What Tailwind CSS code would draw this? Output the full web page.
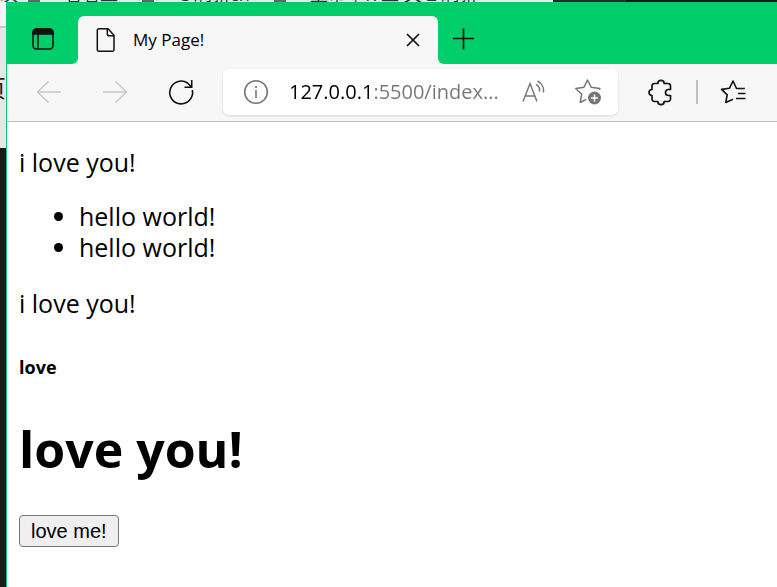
<!DOCTYPE html>
<html lang="en">
  <head>
    <meta charset="UTF-8" />
    <meta name="viewport" content="width=device-width, initial-scale=1.0" />
    <title>My Page!</title>
    <script src="https://cdn.jsdelivr.net/npm/@tailwindcss/browser@4"></script>
  </head>
  <body class="min-h-screen flex flex-col bg-[#1a1a1a] text-black font-['Open_Sans','Noto_Sans_CJK_SC',sans-serif]">
    <!-- window behind, top edge -->
    <div class="flex h-[2px] overflow-hidden bg-[#1a1a1a]" aria-hidden="true">
      <div class="flex items-end w-[553px] h-full bg-[#e6e6e6] text-[#333] text-lg leading-4 whitespace-nowrap">
        <span class="w-7 shrink-0 text-[#235]">次</span>
        <span class="w-3 h-full shrink-0 mr-6 bg-[#666]"></span>
        <span class="w-[78px] shrink-0">看看工</span>
        <span class="w-3 h-full shrink-0 mr-6 bg-[#666]"></span>
        <span class="w-24 shrink-0">C 刷新cn</span>
        <span class="w-3 h-full shrink-0 mr-6 bg-[#666]"></span>
        <span>上市 | R 工 关 Z 刷新</span>
      </div>
      <div class="w-[73px] bg-[#2b2b2b]"></div>
    </div>

    <div class="flex flex-1">
      <!-- window behind, left edge -->
      <div class="w-[6px] shrink-0 overflow-hidden" aria-hidden="true">
        <div class="flex flex-col items-end h-[146px] bg-[#e6e6e6] text-[#222] text-2xl">
          <div class="w-full h-[26px] border-b-2 border-[#c8c8c8] bg-[#f3f3f3]"></div>
          <span class="mt-11">页</span>
        </div>
      </div>

      <div class="flex flex-col flex-1 min-w-0 border-l border-[#00ce6a] bg-white">
        <!-- tabs -->
        <div class="flex h-[62px] bg-[#f7f7f7]">
          <button class="flex items-center justify-center w-[71px] shrink-0 rounded-br-md pt-3 bg-[#00ce6a]" aria-label="Tab actions">
            <svg class="w-6 h-6" viewBox="0 0 24 24" fill="none" stroke="#111" stroke-width="1.5">
              <rect x="2" y="2" width="20" height="20" rx="3.5" />
              <path d="M2 7V5.5A3.5 3.5 0 0 1 5.500 2h13A3.5 3.5 0 0 1 22 5.500V7z" fill="#111" />
              <path d="M7 7v15" />
            </svg>
          </button>
          <div class="flex w-[360px] shrink-0 bg-[#00ce6a]">
            <div class="flex items-center w-full mt-[14px] px-4 rounded-t-md bg-[#f7f7f7]">
              <svg class="w-6 h-6 shrink-0" viewBox="0 0 24 24" fill="none" stroke="#111" stroke-width="1.5" stroke-linejoin="round">
                <path d="M5 .8h9l6 6.500v14.200a1.700 1.700 0 0 1-1.700 1.700H5a1.700 1.700 0 0 1-1.700-1.700v-19A1.700 1.700 0 0 1 5 .8z" />
                <path d="M13.300 1v5a1.800 1.800 0 0 0 1.800 1.800H20" />
              </svg>
              <span class="flex-1 ml-[15px] text-[17px]">My Page!</span>
              <button aria-label="Close tab">
                <svg class="w-[18px] h-[18px]" viewBox="0 0 18 18" stroke="#111" stroke-width="1.7">
                  <path d="M3 3l12 12M15 3L3 15" />
                </svg>
              </button>
            </div>
          </div>
          <div class="flex flex-1 items-center rounded-bl-md pl-3 pt-3 bg-[#00ce6a]">
            <button aria-label="New tab">
              <svg class="w-[26px] h-[26px]" viewBox="0 0 26 26" stroke="#111" stroke-width="1.7">
                <path d="M13.500 2.500v21M3 12.500h21" />
              </svg>
            </button>
          </div>
        </div>

        <!-- toolbar -->
        <div class="flex items-center h-[58px] pl-7 pb-[2px] border-b border-[#bbb] bg-[#f7f7f7]">
          <button aria-label="Back">
            <svg class="w-7 h-7" viewBox="0 0 28 28" fill="none" stroke="#c8c8c8" stroke-width="1.5">
              <path d="M26 14H2.500M13.500 3.500L2.500 14l11 10.500" />
            </svg>
          </button>
          <button class="ml-[38px]" aria-label="Forward">
            <svg class="w-7 h-7" viewBox="0 0 28 28" fill="none" stroke="#c8c8c8" stroke-width="1.5">
              <path d="M2 14h23.500M14.500 3.500l11 10.500-11 10.500" />
            </svg>
          </button>
          <button class="ml-[38px]" aria-label="Refresh">
            <svg class="w-7 h-7" viewBox="0 0 28 28" fill="none" stroke="#111" stroke-width="1.6">
              <path d="M25.300 12A11.400 11.400 0 1 1 20.500 5L24.500 9M24.700 2v7.200h-7.200" />
            </svg>
          </button>
          <div class="flex items-center w-[395px] h-[46px] ml-7 px-5 rounded-md bg-white shadow-sm">
            <svg class="w-[26px] h-[26px] shrink-0" viewBox="0 0 26 26" fill="none" stroke="#767676" stroke-width="1.6">
              <circle cx="13" cy="13" r="11.3" />
              <path d="M13 11v8" />
              <circle cx="13" cy="8" r="1.1" fill="#767676" stroke="none" />
            </svg>
            <input
              type="text"
              aria-label="Address"
              value="127.0.0.1:5500/index..."
              class="flex-1 min-w-0 ml-5 text-xl text-transparent bg-clip-text bg-[linear-gradient(to_right,#000_82px,#767676_82px)]"
            />
            <button class="ml-4" aria-label="Read aloud">
              <svg class="w-[26px] h-[26px]" viewBox="0 0 26 26" fill="none" stroke="#767676" stroke-width="1.5">
                <path d="M3 22.500L10 4.500l7 18M5.500 17h9M16 5.500a6.500 6.500 0 0 1 3.500 7M17.500 2a11 11 0 0 1 6 11.500" />
              </svg>
            </button>
            <button class="ml-7 -mr-1" aria-label="Add to favorites">
              <svg class="w-7 h-7" viewBox="0 0 28 28" fill="none" stroke="#767676" stroke-width="1.5" stroke-linejoin="round">
                <path d="M25.500 12l.3-1.500-8.600-1.300L13.500 2 10 9.200l-8.300 1.300 6 5.700-1.500 8.300 6-3.200" />
                <circle cx="20.500" cy="20" r="6.5" fill="#767676" stroke="none" />
                <path d="M20.500 16.500v7M17 20h7" stroke="#fff" />
              </svg>
            </button>
          </div>
          <button class="ml-7" aria-label="Extensions">
            <svg class="w-7 h-7" viewBox="0 0 28 28" fill="none" stroke="#111" stroke-width="1.7" stroke-linejoin="round">
              <path d="M8.500 5.500h3.300a3.200 3.200 0 0 1 6.400 0H22A2.500 2.500 0 0 1 24.500 8v3.500H22.500a3 3 0 0 0 0 6h2V21a2.500 2.500 0 0 1-2.500 2.500h-3.800a3.200 3.200 0 0 1-6.400 0H8.500A2.500 2.500 0 0 1 6 21v-3.500a3 3 0 0 1 0-6V8a2.500 2.500 0 0 1 2.500-2.500z" />
            </svg>
          </button>
          <div class="w-[2px] h-6 ml-[22px] bg-[#c0c0c0]"></div>
          <button class="ml-[21px]" aria-label="Favorites">
            <svg class="w-7 h-7" viewBox="0 0 28 28" fill="none" stroke="#111" stroke-width="1.6" stroke-linejoin="round">
              <path d="M25.800 10.500h-8.300L14 3l-3.500 7.200-8 1.200 5.700 5.500-1.400 7.600 7.200-3.300M19 15.500h7.500M17 20.500h9.500" />
            </svg>
          </button>
        </div>

        <!-- page -->
        <main class="px-3 pt-6 text-[25px] leading-8">
          <p>i love you!</p>
          <ul class="list-disc mt-[23px] mb-6 pl-[60px] leading-[31px]">
            <li>hello world!</li>
            <li>hello world!</li>
          </ul>
          <p>i love you!</p>
          <h5 class="mt-8 text-lg leading-8 font-bold">love</h5>
          <h1 class="mt-8 text-[50px] leading-[68px] font-bold">love you!</h1>
          <button class="h-8 mt-8 px-[11px] rounded-[4px] border border-[#767676] bg-[#efefef] text-xl leading-none font-['Liberation_Sans',sans-serif]">love me!</button>
        </main>
      </div>
    </div>
  </body>
</html>
